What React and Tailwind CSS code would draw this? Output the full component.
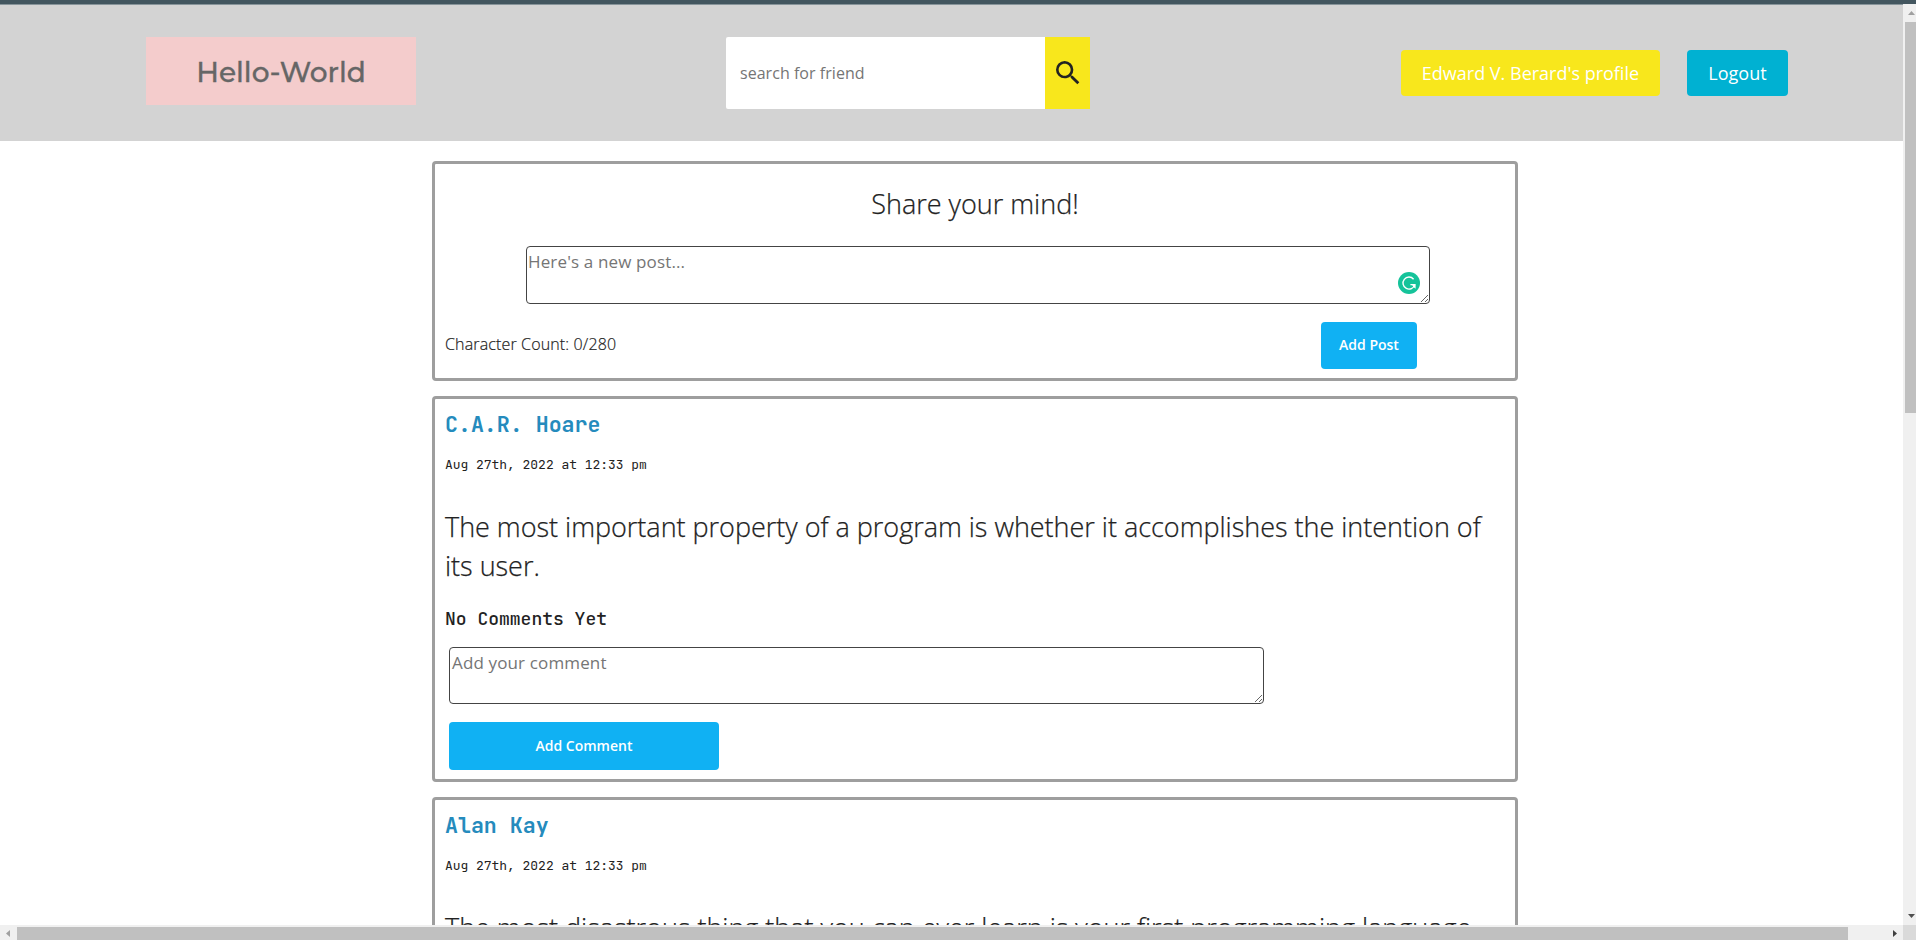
import { MdSearch } from "react-icons/md";

const sans = "font-['Open_Sans','Noto_Sans',sans-serif]";
const mono = "font-['JetBrains_Mono','DejaVu_Sans_Mono',monospace]";

const posts = [
  {
    author: "C.A.R. Hoare",
    date: "Aug 27th, 2022 at 12:33 pm",
    text: "The most important property of a program is whether it accomplishes the intention of its user.",
  },
  {
    author: "Alan Kay",
    date: "Aug 27th, 2022 at 12:33 pm",
    text: "The most disastrous thing that you can ever learn is your first programming language.",
  },
];

function Header() {
  return (
    <header className="flex h-[136px] shrink-0 items-start bg-[#d3d3d3] pl-[146px]">
      <div className="mt-8 flex h-[68px] w-[270px] items-center justify-center bg-[#f4cccc] pt-[2px] font-['Montserrat','Inter',sans-serif] text-[28px] font-medium text-[#666] [-webkit-text-stroke:0.3px_#666]">
        Hello-World
      </div>
      <form className="mt-8 ml-[310px] flex h-[72px] w-[364px]">
        <input
          className="w-[319px] rounded-l-xs bg-white pl-[14px] text-base tracking-[0.04px] text-[#222] outline-none placeholder:text-[#757575]"
          placeholder="search for friend"
        />
        <button type="button" className="flex w-[45px] items-center justify-center bg-[#f8e71c]">
          <MdSearch className="size-8 text-[#222]" />
        </button>
      </form>
      <button className="mt-[45px] ml-[311px] h-[46px] w-[259px] rounded-[4px] bg-[#f8e71c] text-lg whitespace-nowrap text-white">
        Edward V. Berard's profile
      </button>
      <button className="mt-[45px] ml-[27px] h-[46px] w-[101px] rounded-[4px] bg-[#00b1d2] text-lg text-white">
        Logout
      </button>
    </header>
  );
}

function Grammarly() {
  return (
    <svg viewBox="0 0 22 22" className="absolute top-[26px] right-[10px] size-[22px]" fill="none">
      <circle cx="11" cy="11" r="11" fill="#15c39a" />
      <path d="M15.6 7.2A6 6 0 1 0 16.8 12.6" stroke="#fff" strokeWidth="1.4" />
      <path d="M12.4 11.9H17.6V16.8L15.8 15.2L14.2 13.2H12.4Z" fill="#fff" />
    </svg>
  );
}

function NewPost() {
  return (
    <section className="h-[220px] shrink-0 rounded-[4px] border-[3px] border-[#9e9e9e]">
      <h2 className="h-[82px] pt-5 text-center text-[27px] leading-[39px] font-light text-[#222] [-webkit-text-stroke:0.25px_#222]">
        Share your mind!
      </h2>
      <div className="relative ml-[91px] h-[58px] w-[904px]">
        <textarea
          className="h-[58px] w-[904px] rounded-[4px] border border-[#444] px-px pt-[3px] text-[17px] leading-[23px] tracking-[0.14px] outline-none placeholder:text-[#757575]"
          placeholder="Here's a new post..."
        />
        <Grammarly />
      </div>
      <div className="flex justify-between pt-[18px] pr-[98px] pl-[10px]">
        <span className="pt-[10px] text-base font-light tracking-[0.14px] text-[#222] [-webkit-text-stroke:0.2px_#222]">
          Character Count: 0/280
        </span>
        <button className="h-[47px] w-24 rounded-[4px] bg-[#10b1f3] pb-[2px] text-sm font-semibold text-white">Add Post</button>
      </div>
    </section>
  );
}

function Post({ author, date, text }) {
  return (
    <section className="h-[386px] shrink-0 rounded-[4px] border-[3px] border-[#9e9e9e] px-[10px]">
      <h3 className={`mt-[10px] text-[21.6px] leading-[30px] font-bold text-[#258bbd] ${mono}`}>{author}</h3>
      <p className={`mt-4 text-[13px] leading-5 tracking-[-0.04px] text-[#222] ${mono}`}>{date}</p>
      <p className="mt-8 h-[78px] text-[27px] leading-[39px] font-light tracking-[-0.02px] text-[#222] [-webkit-text-stroke:0.25px_#222]">
        {text}
      </p>
      <p className={`mt-[22px] text-lg leading-6 font-medium text-[#222] ${mono}`}>No Comments Yet</p>
      <textarea
        className="mt-4 ml-1 block h-[57px] w-[815px] rounded-[4px] border border-[#444] px-[2px] pt-[3px] text-[17px] leading-[23px] tracking-[0.14px] outline-none placeholder:text-[#757575]"
        placeholder="Add your comment"
      />
      <button className="mt-[18px] ml-1 h-12 w-[270px] rounded-[4px] bg-[#10b1f3] text-sm font-semibold text-white">
        Add Comment
      </button>
    </section>
  );
}

export default function App() {
  return (
    <div className={`flex h-[940px] w-[1916px] flex-col overflow-hidden bg-white ${sans}`}>
      <div className="h-1 shrink-0 bg-[#43565f]" />
      <div className="flex h-[921px] shrink-0">
        <div className="flex w-[1903px] flex-col overflow-hidden">
          <div className="h-px shrink-0 bg-[#87949a]" />
          <Header />
          <main className="mt-5 ml-[432px] flex w-[1086px] flex-col gap-[15px]">
            <NewPost />
            {posts.map((p) => (
              <Post key={p.author} {...p} />
            ))}
          </main>
        </div>
        <div className="flex w-[13px] flex-col bg-[#f0f0f0]">
          <div className="flex h-[18px] items-center justify-end pr-px">
            <svg viewBox="0 0 7 4" className="h-1 w-[7px]">
              <path d="M0 4L3.5 0L7 4Z" fill="#a0a0a0" />
            </svg>
          </div>
          <div className="ml-[2px] h-[391px] bg-[#c0c0c0]" />
          <div className="mt-[501px] flex justify-end pr-px">
            <svg viewBox="0 0 7 4" className="h-1 w-[7px]">
              <path d="M0 0L3.5 4L7 0Z" fill="#505050" />
            </svg>
          </div>
        </div>
      </div>
      <div className="flex h-[15px] shrink-0 bg-[#f0f0f0]">
        <div className="flex w-[17px] items-center pt-[2px] pl-[6px]">
          <svg viewBox="0 0 4 7" className="h-[7px] w-1">
            <path d="M4 0L0 3.5L4 7Z" fill="#a0a0a0" />
          </svg>
        </div>
        <div className="mt-[2px] w-[1831px] bg-[#c0c0c0]" />
        <div className="flex w-[55px] items-center justify-end pt-[2px] pr-[6px]">
          <svg viewBox="0 0 4 7" className="h-[7px] w-1">
            <path d="M0 0L4 3.5L0 7Z" fill="#404040" />
          </svg>
        </div>
        <div className="w-[13px] bg-[#dadada]" />
      </div>
    </div>
  );
}
